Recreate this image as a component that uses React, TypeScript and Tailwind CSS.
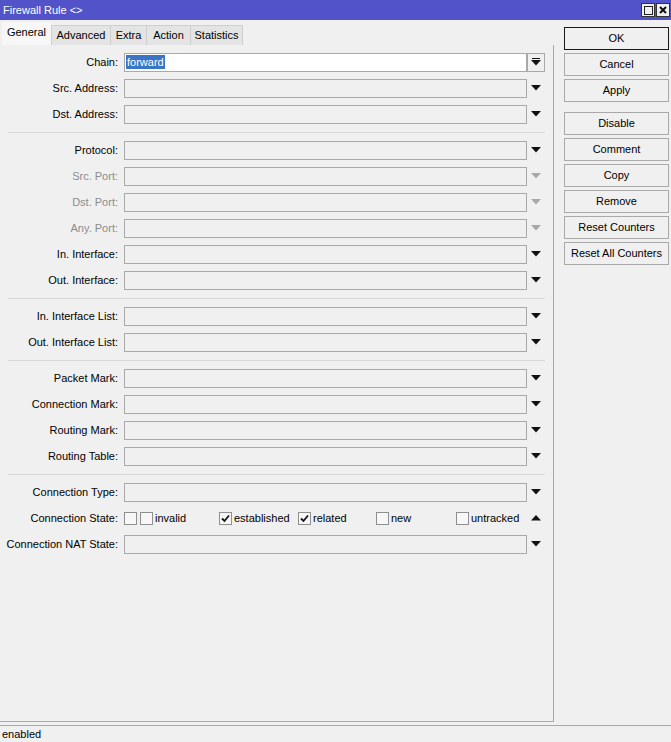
import React from 'react';

type Row = { label: string; disabled?: boolean; value?: string };

const groups: Row[][] = [
  [{ label: 'Chain:', value: 'forward' }, { label: 'Src. Address:' }, { label: 'Dst. Address:' }],
  [
    { label: 'Protocol:' },
    { label: 'Src. Port:', disabled: true },
    { label: 'Dst. Port:', disabled: true },
    { label: 'Any. Port:', disabled: true },
    { label: 'In. Interface:' },
    { label: 'Out. Interface:' },
  ],
  [{ label: 'In. Interface List:' }, { label: 'Out. Interface List:' }],
  [{ label: 'Packet Mark:' }, { label: 'Connection Mark:' }, { label: 'Routing Mark:' }, { label: 'Routing Table:' }],
];

const tabs = ['General', 'Advanced', 'Extra', 'Action', 'Statistics'];
const tabWidths = ['w-[49px]', 'w-[59px]', 'w-[36px]', 'w-[44px]', 'w-[53px]'];

const buttons1 = ['OK', 'Cancel', 'Apply'];
const buttons2 = ['Disable', 'Comment', 'Copy', 'Remove', 'Reset Counters', 'Reset All Counters'];

function DownArrow({ gray }: { gray?: boolean }) {
  return (
    <svg width="10" height="6" viewBox="0 0 10 6">
      <polygon points="0,0 10,0 5,5.5" fill={gray ? '#a8a8a8' : '#111'} />
    </svg>
  );
}

function UpArrow() {
  return (
    <svg width="10" height="6" viewBox="0 0 10 6">
      <polygon points="0,5.5 10,5.5 5,0" fill="#111" />
    </svg>
  );
}

function Check({ checked }: { checked?: boolean }) {
  return (
    <div className="w-[13px] h-[13px] border border-[#8e8f8f] bg-[#f7f7f7] flex items-center justify-center shrink-0">
      {checked && (
        <svg width="9" height="9" viewBox="0 0 9 9">
          <path d="M1 4.5 L3.5 7 L8 1.5" stroke="#111" strokeWidth="1.8" fill="none" />
        </svg>
      )}
    </div>
  );
}

function FieldRow({ row }: { row: Row }) {
  const isChain = row.value !== undefined;
  return (
    <div className="h-[26px] flex items-center">
      <div className={`w-[118px] text-right ${row.disabled ? 'text-[#8c8c8c]' : 'text-black'}`}>{row.label}</div>
      <div
        className={`ml-[6px] w-[403px] h-[19px] border border-[#a9a9a9] flex items-center ${
          isChain ? 'bg-white' : 'bg-[#f0f0f0]'
        }`}
      >
        {isChain && <span className="ml-[1px] bg-[#3a76c6] text-white leading-[14px] px-[1px]">{row.value}</span>}
      </div>
      {isChain ? (
        <div className="w-[18px] h-[19px] border border-[#a9a9a9] flex flex-col items-center justify-center gap-[1px]">
          <div className="w-[8px] h-[1px] bg-[#111]" />
          <DownArrow />
        </div>
      ) : (
        <div className="w-[18px] flex justify-center">
          <DownArrow gray={row.disabled} />
        </div>
      )}
    </div>
  );
}

function Separator() {
  return (
    <div className="h-[10px] flex items-center pl-[8px] pr-[8px]">
      <div className="w-full h-[1px] bg-[#d8d8d8]" />
    </div>
  );
}

function Btn({ text, def }: { text: string; def?: boolean }) {
  return (
    <div
      className={`w-[105px] h-[23px] flex items-center justify-center bg-[#f0f0f0] border ${
        def ? 'border-[#1a1a1a]' : 'border-[#a9a9a9]'
      }`}
    >
      {text}
    </div>
  );
}

export default function App() {
  return (
    <div
      className="w-[671px] h-[742px] bg-[#f0f0f0] flex flex-col text-[11px] text-black overflow-hidden"
      style={{ fontFamily: '"Liberation Sans", Arial, sans-serif' }}
    >
      {/* title bar */}
      <div className="h-[20px] bg-[#5353c9] flex items-center pl-[3px] pr-[1px]">
        <span className="text-white flex-1">Firewall Rule &lt;&gt;</span>
        <div className="w-[14px] h-[14px] bg-[#f0f0f0] border border-[#333] flex items-center justify-center mr-[1px]">
          <div className="w-[9px] h-[9px] border border-[#222]" />
        </div>
        <div className="w-[14px] h-[14px] bg-[#f0f0f0] border border-[#333] flex items-center justify-center">
          <svg width="8" height="8" viewBox="0 0 8 8">
            <path d="M1 1 L7 7 M7 1 L1 7" stroke="#111" strokeWidth="2" />
          </svg>
        </div>
      </div>

      <div className="flex flex-1">
        {/* left side */}
        <div className="w-[554px] flex flex-col pt-[2px] pb-[3px]">
          <div className="h-[23px] flex items-end pl-[2px]">
            {tabs.map((t, i) =>
              i === 0 ? (
                <div key={t} className={`${tabWidths[i]} h-[23px] bg-[#f7f7f7] flex items-center justify-center pb-[3px]`}>
                  {t}
                </div>
              ) : (
                <div
                  key={t}
                  className={`${tabWidths[i]} h-[20px] bg-[#e4e4e4] border-l border-t border-[#cfcfcf] flex items-center justify-center ${
                    i === tabs.length - 1 ? 'border-r' : ''
                  }`}
                >
                  {t}
                </div>
              )
            )}
          </div>
          <div className="flex-1 border-r border-b border-[#a9a9a9] pt-[4px]">
            {groups.map((g, gi) => (
              <div key={gi}>
                {g.map((r) => (
                  <FieldRow key={r.label} row={r} />
                ))}
                <Separator />
              </div>
            ))}
            <FieldRow row={{ label: 'Connection Type:' }} />
            <div className="h-[26px] flex items-center">
              <div className="w-[118px] text-right">Connection State:</div>
              <div className="ml-[6px] w-[403px] flex items-center">
                <div className="w-[95px] flex items-center">
                  <Check />
                  <div className="ml-[3px]">
                    <Check />
                  </div>
                  <span className="ml-[2px]">invalid</span>
                </div>
                <div className="w-[79px] flex items-center">
                  <Check checked />
                  <span className="ml-[2px]">established</span>
                </div>
                <div className="w-[78px] flex items-center">
                  <Check checked />
                  <span className="ml-[2px]">related</span>
                </div>
                <div className="w-[80px] flex items-center">
                  <Check />
                  <span className="ml-[2px]">new</span>
                </div>
                <div className="w-[71px] flex items-center">
                  <Check />
                  <span className="ml-[2px]">untracked</span>
                </div>
              </div>
              <div className="w-[18px] flex justify-center">
                <UpArrow />
              </div>
            </div>
            <FieldRow row={{ label: 'Connection NAT State:' }} />
          </div>
        </div>

        {/* right buttons */}
        <div className="flex-1 pl-[10px] pt-[7px] flex flex-col gap-[3px]">
          {buttons1.map((b) => (
            <Btn key={b} text={b} def={b === 'OK'} />
          ))}
          <div className="h-[4px]" />
          {buttons2.map((b) => (
            <Btn key={b} text={b} />
          ))}
        </div>
      </div>

      {/* status bar */}
      <div className="h-[17px] border-t border-[#a9a9a9] flex items-center pl-[2px]">enabled</div>
    </div>
  );
}
